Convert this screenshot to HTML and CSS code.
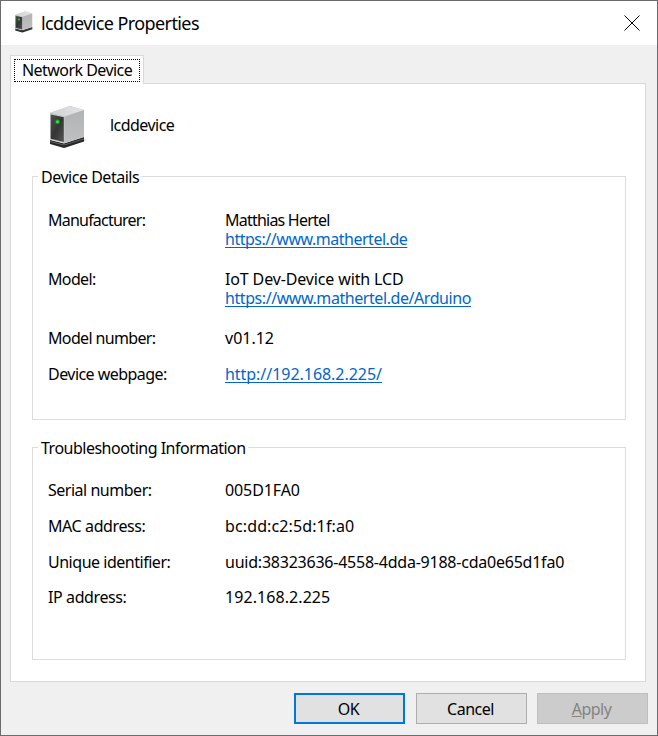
FILE: index.html
```
<!DOCTYPE html>
<html lang="en">
<head>
<meta charset="utf-8">
<title>lcddevice Properties</title>
<link rel="stylesheet" href="styles.css">
</head>
<body>
<svg class="defs" aria-hidden="true">
  <defs>
    <linearGradient id="front" x1="0" y1="0" x2="1" y2="1"><stop offset="0" stop-color="#505050"/><stop offset=".5" stop-color="#353535"/><stop offset="1" stop-color="#555"/></linearGradient>
    <linearGradient id="side" x1="0" y1="0" x2="0" y2="1"><stop offset="0" stop-color="#b0b1b3"/><stop offset="1" stop-color="#bfc0c2"/></linearGradient>
    <linearGradient id="lid" x1="0" y1="0" x2="1" y2="0"><stop offset="0" stop-color="#d1d2d4"/><stop offset="1" stop-color="#e3e4e6"/></linearGradient>
    <symbol id="server" viewBox="0 0 37 44">
      <path d="M15 43 34 36 37 35 35 34 15 40Z" fill="#ddd"/>
      <path d="M0 35 14 38.500 34 32V36.500L14 43 0 39Z" fill="#252525"/>
      <path d="M0 36.500 14 40 34 34" fill="none" stroke="#777" stroke-width=".7"/>
      <path d="M0 8 20 1 34 5V32L14.500 38 0 34.500Z" fill="url(#side)"/>
      <path d="M0 8 20 1 34 5 14.500 11.500Z" fill="url(#lid)"/>
      <path d="M0 8 14.500 11.500V38L0 34.500Z" fill="#c6c7c9"/>
      <path d="M.7 9.500 13.800 12.300V37L.7 33.700Z" fill="url(#front)"/>
      <circle cx="7.500" cy="16.800" r="2.500" fill="#138813"/>
      <circle cx="7.500" cy="16.800" r="1.500" fill="#20f428"/>
    </symbol>
  </defs>
</svg>
<div class="window">
  <header class="titlebar">
    <svg class="app-icon"><use href="#server"/></svg>
    <h1 class="title">lcddevice Properties</h1>
    <svg class="close" viewBox="0 0 16 16"><path d="M.5.500 15.500 15.500M15.500.500.5 15.500"/></svg>
  </header>
  <main class="content">
    <div class="tab"><span class="tab-label">Network Device</span></div>
    <section class="panel">
      <div class="device">
        <svg class="device-icon"><use href="#server"/></svg>
        <span class="t54">lcddevice</span>
      </div>
      <fieldset class="group details">
        <legend class="t47">Device Details</legend>
        <dl class="double">
          <dt class="t76">Manufacturer:</dt>
          <dd><span class="t76">Matthias Hertel</span><br><a class="t47">https://www.mathertel.de</a></dd>
        </dl>
        <dl class="double">
          <dt class="t65">Model:</dt>
          <dd><span class="t15">IoT Dev-Device with LCD</span><br><a class="t43">https://www.mathertel.de/Arduino</a></dd>
        </dl>
        <dl><dt class="t65">Model number:</dt><dd>v01.12</dd></dl>
        <dl><dt class="t54">Device webpage:</dt><dd><a class="t04">http://192.168.2.225/</a></dd></dl>
      </fieldset>
      <fieldset class="group trouble">
        <legend class="t50">Troubleshooting Information</legend>
        <dl><dt class="t47">Serial number:</dt><dd class="t09">005D1FA0</dd></dl>
        <dl><dt class="t40">MAC address:</dt><dd class="w12">bc:dd:c2:5d:1f:a0</dd></dl>
        <dl class="short"><dt class="t47">Unique identifier:</dt><dd class="t23">uuid:38323636-4558-4dda-9188-cda0e65d1fa0</dd></dl>
        <dl><dt class="t40">IP address:</dt><dd class="w07">192.168.2.225</dd></dl>
      </fieldset>
    </section>
  </main>
  <footer class="actions">
    <button class="default">OK</button>
    <button>Cancel</button>
    <button disabled><u>A</u>pply</button>
  </footer>
</div>
</body>
</html>
```
FILE: styles.css
```
* { box-sizing: border-box; }
body { margin: 0; font: 16px/19px "Noto Sans", sans-serif; color: #000; background: #f0f0f0; }
.defs { display: block; width: 0; height: 0; }
.window { display: flex; flex-direction: column; width: 658px; height: 736px; border: 1px solid #6b6a6c; background: #f0f0f0; }
.titlebar { display: flex; align-items: center; height: 44px; padding: 0 17px 0 14px; background: #fff; }
.app-icon { width: 19px; height: 22px; margin: 0 7px 2px 0; }
.title { flex: 1; margin: 0; font-size: 18px; font-weight: 400; line-height: 24px; letter-spacing: -.6px; }
.close { width: 16px; height: 16px; margin-bottom: 1px; fill: none; stroke: #000; stroke-width: 1; }
.content { display: flex; flex: 1; flex-direction: column; align-items: flex-start; padding: 10px 11px 0 9px; }
.tab { position: relative; width: 134px; height: 29px; margin-bottom: -1px; padding: 3px; border: 1px solid #d9d9d9; border-bottom: 0; background: #fff; }
.tab-label { display: block; width: 126px; height: 23px; padding-left: 7px; border: 1px dotted #000; line-height: 21px; letter-spacing: -.55px; white-space: nowrap; }
.panel { width: 636px; height: 599px; padding: 21px 19px 0 21px; border: 1px solid #d9d9d9; background: #fff; }
.device { display: flex; align-items: center; gap: 23px; height: 44px; padding-left: 18px; }
.device > span { margin-bottom: 4px; }
.device-icon { width: 37px; height: 44px; }
.group { margin: 0; padding: 0 0 0 15px; border: 1px solid #dcdcdc; }
.group legend { height: 19px; margin-left: -10px; padding: 0 2px 0 3px; line-height: 21px; }
.details { height: 253px; margin-top: 18px; }
.details legend + dl { margin-top: 25px; }
.trouble { height: 222px; margin-top: 18px; }
.trouble legend + dl { margin-top: 24px; }
dl { display: grid; grid-template-columns: 177px 1fr; height: 36px; margin: 0; }
dl.double { height: 59px; }
dl.short { height: 35px; }
dt, dd { margin: 0; white-space: nowrap; }
a { color: #0066cc; text-decoration: underline; text-decoration-thickness: 1px; text-underline-offset: 2px; text-decoration-skip-ink: none; }
.actions { display: flex; justify-content: flex-end; gap: 10px; height: 42px; padding-right: 9px; }
button { width: 111px; height: 31px; padding: 2px 2px 0 0; border: 1px solid #adadad; background: #e1e1e1; color: #000; font: inherit; letter-spacing: -.5px; }
button.default { margin-right: 1px; border: 2px solid #0078d7; }
button:disabled { border-color: #bfbfbf; background: #ccc; color: #838383; }
.t04 { letter-spacing: -.04px; }
.t09 { letter-spacing: -.09px; }
.t15 { letter-spacing: -.14px; }
.t23 { letter-spacing: -.23px; }
.t40 { letter-spacing: -.4px; }
.t43 { letter-spacing: -.43px; }
.t47 { letter-spacing: -.48px; }
.t50 { letter-spacing: -.5px; }
.t54 { letter-spacing: -.54px; }
.t65 { letter-spacing: -.65px; }
.t76 { letter-spacing: -.78px; }
.w07 { letter-spacing: .07px; }
.w12 { letter-spacing: .12px; }
```
